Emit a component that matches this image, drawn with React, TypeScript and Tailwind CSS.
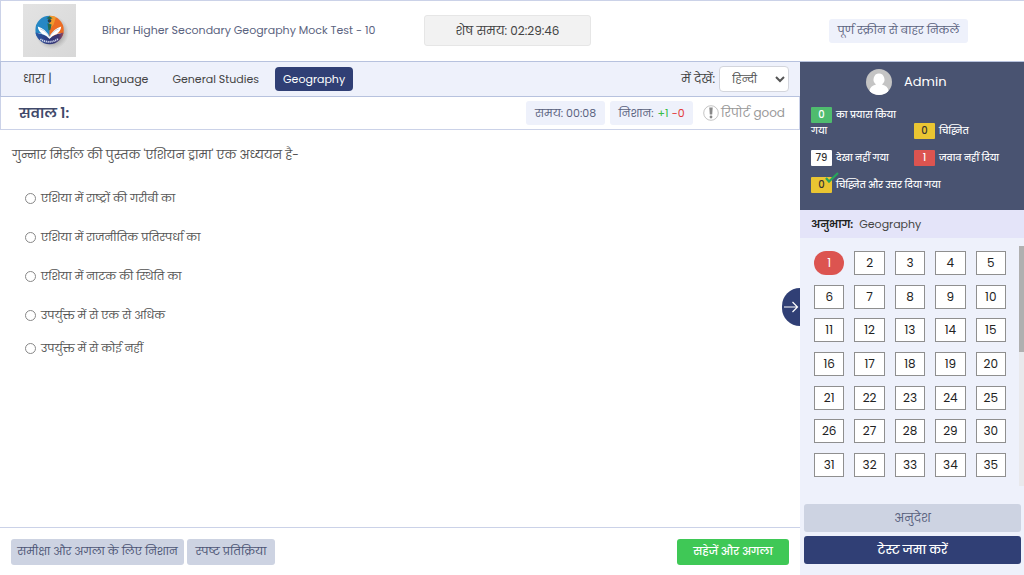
import React from 'react';
import { clsx } from 'clsx';

type QuestionStatus = 'unseen' | 'unanswered';

interface LegendItemProps {
  count: number;
  label: string;
  badgeClass: string;
  className?: string;
  ticked?: boolean;
}

const sections = ['Language', 'General Studies', 'Geography'];

const options = [
  'एशिया में राष्ट्रों की गरीबी का',
  'एशिया में राजनीतिक प्रतिस्पर्धा का',
  'एशिया में नाटक की स्थिति का',
  'उपर्युक्त में से एक से अधिक',
  'उपर्युक्त में से कोई नहीं',
];

const questions = Array.from({ length: 35 }, (_, i) => i + 1);

const statusClasses: Record<QuestionStatus, string> = {
  unseen: 'border border-[#8f8f8f] bg-white text-[#222]',
  unanswered: 'rounded-full bg-[#dc5450] text-white',
};

const Logo = () => (
  <svg viewBox="0 0 52 52" className="size-[53px] shrink-0" role="img" aria-label="Logo">
    <defs>
      <linearGradient id="paper" x1="0" y1="0" x2="1" y2="1">
        <stop offset="0" stopColor="#e3e3e3" />
        <stop offset="1" stopColor="#d8d8d8" />
      </linearGradient>
      <radialGradient id="shade">
        <stop offset="0.6" stopColor="#888" stopOpacity="0.6" />
        <stop offset="1" stopColor="#999" stopOpacity="0" />
      </radialGradient>
      <linearGradient id="base" x1="0" y1="0" x2="1" y2="0">
        <stop offset="0" stopColor="#2a5aa8" />
        <stop offset="0.4" stopColor="#2c3c80" />
        <stop offset="0.8" stopColor="#3b3472" />
        <stop offset="1" stopColor="#a04a5c" />
      </linearGradient>
      <clipPath id="disc">
        <circle cx="26" cy="25.5" r="14" />
      </clipPath>
    </defs>
    <rect width="52" height="52" fill="url(#paper)" />
    <circle cx="28.500" cy="28" r="16.500" fill="url(#shade)" />
    <g clipPath="url(#disc)">
      <rect x="12" y="11" width="15" height="21" fill="#2687c4" />
      <rect x="26" y="11" width="16" height="21" fill="#ec6c24" />
      <path d="M26 11h7l-3 9-4 5z" fill="#f19a2e" />
      <path d="M12 28q8 1 14 6 6-5 14-6v14H12z" fill="url(#base)" />
    </g>
    <path d="M26 32q-4-8-11.500-10 .5 5 4.500 7-3-.5-5 0 7 0 12 5 5-5 12-5-2-.5-5 0 4-2 4.500-7Q30 24 26 32z" fill="#fff" />
    <path d="M17 24.500q6 2 9 8 3-6 9-8" fill="none" stroke="#a9bdd5" strokeWidth="0.700" />
    <circle cx="26" cy="16.500" r="1.800" fill="#243c4c" />
    <path d="M23 14l3-2 3 2-3 1zM24 19l4 1-1 5-2 1z" fill="#246b50" />
    <path d="M17 34.500q9 5.500 18-.5" fill="none" stroke="#d5daf0" strokeWidth="1.800" strokeDasharray="1.200 0.700" />
  </svg>
);

const Avatar = () => (
  <svg viewBox="0 0 26 26" className="size-[26px]" aria-hidden="true">
    <defs>
      <clipPath id="avatar">
        <circle cx="13" cy="13" r="13" />
      </clipPath>
    </defs>
    <g clipPath="url(#avatar)">
      <rect width="26" height="26" fill="#c4c4c4" />
      <path d="M13 4.500a5.500 6 0 0 0-3 11c-4 1-6 3-6.500 6V26h19v-4.500c-.5-3-2.500-5-6.500-6a5.500 6 0 0 0-3-11z" fill="#fff" />
    </g>
  </svg>
);

const LegendItem: React.FC<LegendItemProps> = ({ count, label, badgeClass, className, ticked = false }) => (
  <div className={clsx('text-[9px] leading-4 font-medium text-white', className)}>
    <span className={clsx('relative mr-1 inline-block h-4 w-[21px] rounded-[1px] text-center text-[10px] leading-4', badgeClass)}>
      {count}
      {ticked && (
        <svg viewBox="0 0 14 11" className="absolute -top-[5px] -right-[7px] h-[11px] w-[14px]" aria-hidden="true">
          <path d="M1 6l3 3.500L13 1" fill="none" stroke="#27a55b" strokeWidth="2.300" />
        </svg>
      )}
    </span>
    {label}
  </div>
);

const Header = () => (
  <header className="flex h-[61px] shrink-0 items-center border-t border-l border-[#cbd2e8] bg-white pb-px pl-[22px]">
    <Logo />
    <h1 className="ml-[26px] w-[322px] shrink-0 text-[11px] text-[#5b6380]">
      Bihar Higher Secondary Geography Mock Test - 10
    </h1>
    <div className="flex h-[31px] w-[167px] items-center justify-center rounded-[3px] border border-[#e6e6e6] bg-[#f2f2f2] text-xs text-[#444]">
      शेष समय: 02:29:46
    </div>
    <button type="button" className="mr-14 ml-auto h-6 w-[139px] rounded-[3px] bg-[#eef1fb] text-[11px] whitespace-nowrap text-[#5b6380]">
      पूर्ण स्क्रीन से बाहर निकलें
    </button>
  </header>
);

const SectionBar = () => (
  <nav className="flex h-9 items-center border-y border-l border-[#b7c2de] bg-[#eef1fb] pr-[11px] pl-[22px] text-xs text-[#444]">
    <span className="w-[62px]">धारा |</span>
    <div className="flex items-center gap-2">
      {sections.map((section) => (
        <button
          key={section}
          type="button"
          className={clsx('h-6 rounded px-2 text-[11px]', section === 'Geography' && 'bg-[#303f75] text-white')}
        >
          {section}
        </button>
      ))}
    </div>
    <label htmlFor="language" className="mr-1 ml-auto">में देखें:</label>
    <select id="language" className="h-[26px] w-[70px] rounded border border-[#d3d5dc] bg-white pl-2 text-[11px] text-[#555]">
      <option>हिन्दी</option>
    </select>
  </nav>
);

const QuestionBar = () => (
  <div className="flex h-[33px] items-center border-x border-b border-[#cbd2e8] pr-[14px] pl-[18px] text-[11px] text-[#5b6380]">
    <h2 className="text-sm font-semibold text-[#414a6b]">सवाल 1:</h2>
    <div className="ml-auto flex h-6 w-[79px] items-center justify-center rounded-[3px] bg-[#eef1fb]">समय: 00:08</div>
    <div className="ml-[5px] flex h-6 w-[83px] items-center justify-center rounded-[3px] bg-[#eef1fb]">
      <span>निशान:</span>
      <span className="ml-1 text-[#38bd48]">+1</span>
      <span className="ml-[3px] text-[#e23a3a]">-0</span>
    </div>
    <button type="button" className="ml-[10px] flex items-center gap-[2px] text-xs text-[#999]">
      <svg viewBox="0 0 16 16" className="size-4" aria-hidden="true">
        <circle cx="8" cy="8" r="7.300" fill="none" stroke="#aaa" strokeWidth="0.700" />
        <path d="M6.300 2.500h3.400L9.200 9.500H6.800z" fill="#888" />
        <circle cx="8" cy="12" r="1.400" fill="#888" />
      </svg>
      रिपोर्ट good
    </button>
  </div>
);

const Question = () => (
  <fieldset className="relative min-h-0 flex-1 px-3 text-[11px] text-[#555]">
    <legend className="pt-[13px] text-xs leading-6">गुन्नार मिर्डाल की पुस्तक 'एशियन ड्रामा' एक अध्ययन है-</legend>
    <div className="mt-[19px] pl-[13px]">
      {options.map((option, index) => (
        <label
          key={option}
          className={clsx('flex h-6 items-center gap-[5px]', index === options.length - 1 ? 'mt-[9px]' : index > 0 && 'mt-[15px]')}
        >
          <input type="radio" name="answer" className="size-[11px] appearance-none rounded-full border border-[#888] checked:bg-[#303f75]" />
          {option}
        </label>
      ))}
    </div>
    <button
      type="button"
      aria-label="Toggle panel"
      className="absolute top-[121px] right-0 flex h-[38px] w-[18px] items-center justify-center rounded-l-full bg-[#303f75]"
    >
      <svg viewBox="0 0 16 12" className="h-3 w-4" aria-hidden="true">
        <path d="M1 6h13.500M9.500 1l5 5-5 5" fill="none" stroke="#fff" strokeWidth="1.200" />
      </svg>
    </button>
  </fieldset>
);

const Footer = () => (
  <footer className="flex h-12 shrink-0 items-center gap-[3px] border-t border-[#cbd2e8] px-[11px] text-[11px] whitespace-nowrap">
    <button type="button" className="h-[26px] w-[173px] rounded-[3px] bg-[#cdd3e2] text-[#4d5676]">
      समीक्षा और अगला के लिए निशान
    </button>
    <button type="button" className="h-[26px] w-[88px] rounded-[3px] bg-[#cdd3e2] text-[#4d5676]">
      स्पष्ट प्रतिक्रिया
    </button>
    <button type="button" className="ml-auto h-[26px] w-[112px] rounded-[3px] bg-[#3fc856] font-medium text-white">
      सहेजें और अगला
    </button>
  </footer>
);

const Sidebar = () => (
  <aside className="flex w-56 shrink-0 flex-col bg-[#eef1fb]">
    <div className="h-[149px] shrink-0 border-t border-[#b7c2de] bg-[#495371] px-[11px] pt-[7px]">
      <div className="flex items-center gap-3 pl-[55px] text-[13px] text-white">
        <Avatar />
        Admin
      </div>
      <div className="mt-3 grid grid-cols-2 items-end gap-y-[11px]">
        <LegendItem count={0} label="का प्रयास किया गया" badgeClass="bg-[#4fbc6e]" className="pr-2" />
        <LegendItem count={0} label="चिह्नित" badgeClass="bg-[#eac532] text-[#333]" className="pl-[2px]" />
        <LegendItem count={79} label="देखा नहीं गया" badgeClass="bg-white text-[#333]" />
        <LegendItem count={1} label="जवाब नहीं दिया" badgeClass="bg-[#dc5450]" className="pl-[2px]" />
        <LegendItem count={0} label="चिह्नित और उत्तर दिया गया" badgeClass="bg-[#eac532] text-[#333]" className="col-span-2" ticked />
      </div>
    </div>
    <div className="flex h-7 shrink-0 items-center gap-[6px] bg-[#e4e4f9] px-[11px] text-[11px] text-[#444]">
      <strong className="font-semibold text-[#222]">अनुभाग:</strong>
      Geography
    </div>
    <div className="mt-2 flex min-h-0 flex-1">
      <div className="grid flex-1 grid-cols-5 content-between gap-x-[10px] pt-[5px] pr-[13px] pb-[9px] pl-[14px]">
        {questions.map((number) => (
          <button
            key={number}
            type="button"
            className={clsx('h-6 text-xs', statusClasses[number === 1 ? 'unanswered' : 'unseen'])}
          >
            {number}
          </button>
        ))}
      </div>
      <div className="w-[5px] bg-[#e9e9ec]">
        <div className="h-[106px] bg-[#b0b0b0]" />
      </div>
    </div>
    <div className="mt-[18px] flex flex-col gap-1 pr-[3px] pb-[11px] pl-1 text-xs">
      <button type="button" className="h-7 rounded-[3px] bg-[#cdd3e2] text-[#5b6380]">अनुदेश</button>
      <button type="button" className="h-7 rounded-[3px] bg-[#303f75] font-medium text-white">टेस्ट जमा करें</button>
    </div>
  </aside>
);

const App = () => (
  <div className="flex h-screen flex-col bg-white font-[Poppins,Inter,'Noto_Sans',sans-serif]">
    <Header />
    <div className="flex min-h-0 flex-1">
      <main className="flex min-w-0 flex-1 flex-col">
        <SectionBar />
        <QuestionBar />
        <Question />
        <Footer />
      </main>
      <Sidebar />
    </div>
  </div>
);

export default App;
